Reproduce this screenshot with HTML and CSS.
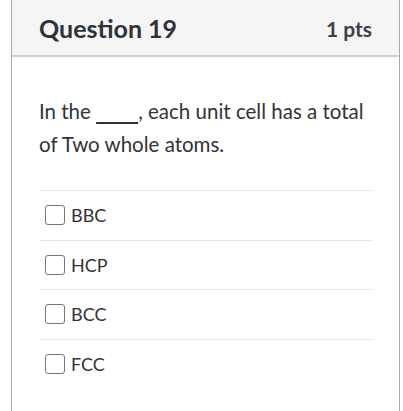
FILE: index.html
```html
<!DOCTYPE html>
<html>
<head>
<meta charset="utf-8">
<link rel="stylesheet" href="styles.css">
</head>
<body>
<div class="question">
  <div class="header">
    <span class="title">Question 19</span>
    <span class="pts">1 pts</span>
  </div>
  <div class="content">
    <p class="text"><span>In the</span> <span class="blank">&nbsp;&nbsp;&nbsp;&nbsp;&nbsp;&nbsp;&nbsp;&nbsp;</span><span>, each unit cell has a total</span> <span>of Two whole atoms.</span></p>
    <div class="answers">
      <label class="answer"><span class="box"></span><span class="label">BBC</span></label>
      <label class="answer"><span class="box"></span><span class="label">HCP</span></label>
      <label class="answer"><span class="box"></span><span class="label">BCC</span></label>
      <label class="answer"><span class="box"></span><span class="label">FCC</span></label>
    </div>
  </div>
</div>
</body>
</html>
```
FILE: styles.css
```css
html, body {
  margin: 0;
  padding: 0;
  background: #fff;
}
body {
  font-family: Lato, "Liberation Sans", sans-serif;
  color: #333;
  width: 403px;
  height: 411px;
  overflow: hidden;
}
.question {
  margin-left: 11px;
  width: 387px;
  height: 411px;
  border-left: 1px solid #a9a9a9;
  border-right: 1px solid #a9a9a9;
}
.header {
  height: 55px;
  background: #f5f5f5;
  border-bottom: 2px solid #d0d0d0;
  display: flex;
  align-items: center;
  justify-content: space-between;
  padding: 0 27px 0 27px;
}
.title {
  font-weight: 700;
  font-size: 25px;
  color: #2d3338;
  padding-top: 1px;
}
.pts {
  font-weight: 700;
  font-size: 21px;
  color: #3d4248;
  padding-top: 1px;
}
.content {
  padding: 0 26px 0 27px;
}
.text {
  margin: 0;
  padding-top: 38px;
  font-size: 20.5px;
  line-height: 33px;
  color: #333;
  padding-bottom: 29px;
}
.blank {
  text-decoration: underline;
  text-decoration-thickness: 1.5px;
  text-underline-offset: 3px;
}
.answers {
  display: flex;
  flex-direction: column;
}
.answer {
  display: flex;
  align-items: center;
  height: 48.6px;
  border-top: 1px solid #e6e6e6;
  padding-left: 6px;
  gap: 6px;
}
.box {
  width: 18px;
  height: 18px;
  border: 1.5px solid #777;
  border-radius: 3px;
  background: #fff;
}
.label {
  font-size: 18px;
  color: #333;
}
```
